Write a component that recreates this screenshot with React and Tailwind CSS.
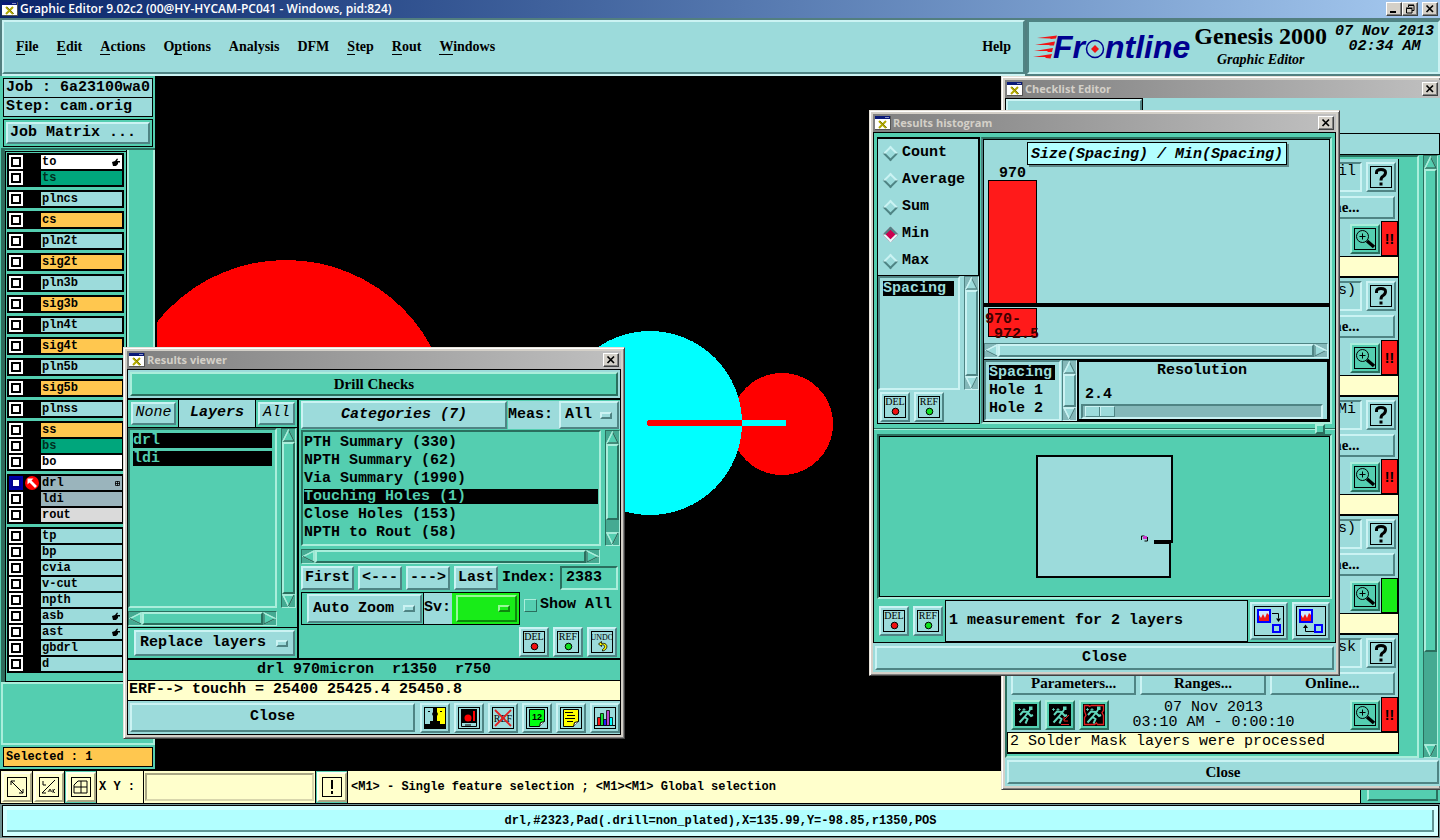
import React from "react";

const MONO = "font-['Liberation_Mono','Courier_New',monospace]";
const SERIF = "font-['Liberation_Serif','Times_New_Roman',serif]";
const UI = "font-['Open_Sans','Noto_Sans',sans-serif]";

const RAISED =
  "border-2 border-t-[#cbf3f3] border-l-[#cbf3f3] border-b-[#4f8484] border-r-[#4f8484] bg-[#9cdbdb]";
const SUNKEN =
  "border-2 border-t-[#4f8484] border-l-[#4f8484] border-b-[#cbf3f3] border-r-[#cbf3f3] bg-[#9cdbdb]";
const RAISED_TEAL =
  "border-2 border-t-[#aaeedb] border-l-[#aaeedb] border-b-[#2a6f5e] border-r-[#2a6f5e] bg-[#54ceb0]";
const SUNKEN_TEAL =
  "border-2 border-t-[#2a6f5e] border-l-[#2a6f5e] border-b-[#aaeedb] border-r-[#aaeedb] bg-[#54ceb0]";
const RAISED_CREAM =
  "border-2 border-t-[#ffffee] border-l-[#ffffee] border-b-[#a8a684] border-r-[#a8a684] bg-[#ffffcc]";

function AppGlyph() {
  return (
    <svg viewBox="0 0 16 14" className="h-[14px] w-4 shrink-0" aria-hidden="true">
      <rect width="16" height="14" fill="#555" />
      <rect x="0" y="0" width="15" height="13" fill="#fff" />
      <rect x="0" y="0" width="15" height="3" fill="#0a1a78" />
      <rect x="10" y="1" width="4" height="1" fill="#8890c0" />
      <path d="M4 5l7 7M11 5l-7 7" stroke="#b0a800" strokeWidth="2" />
      <path d="M5 5l7 7" stroke="#6b6600" strokeWidth="0.7" />
    </svg>
  );
}

function WinButton({ label, kind }) {
  return (
    <button
      aria-label={label}
      className="flex h-[14px] w-4 shrink-0 items-center justify-center border border-t-white border-l-white border-b-[#404040] border-r-[#404040] bg-[#d4d0c8] shadow-[inset_-1px_-1px_0_#808080]"
    >
      <svg viewBox="0 0 10 10" className="h-[10px] w-[10px]" fill="none" stroke="#000" aria-hidden="true">
        {kind === "close" && <path d="M1.5 1.5l6.5 6.5M8 1.5L1.5 8" strokeWidth="1.7" />}
        {kind === "min" && <path d="M1 8h6" strokeWidth="2" />}
        {kind === "restore" && (
          <path d="M3.5 3V1.5H9v5H7M3 1h6M1.5 4.5H7V9H1.5zM1 4h6.5" strokeWidth="1" />
        )}
      </svg>
    </button>
  );
}

function Window({ title, className, children }) {
  return (
    <section
      aria-label={title}
      className={
        "absolute flex flex-col border border-t-[#e6e2da] border-l-[#e6e2da] border-b-[#404040] border-r-[#404040] bg-[#d4d0c8] p-[3px] shadow-[inset_1px_1px_0_#fff,inset_-1px_-1px_0_#808080] " +
        className
      }
    >
      <header className="flex h-[18px] items-center gap-1 bg-linear-to-r from-[#808080] to-[#c0c0c0] px-[2px]">
        <AppGlyph />
        <h2 className={UI + " -ml-[2px] flex-1 text-[11px] font-bold leading-4 text-[#d4d0c8]"}>{title}</h2>
        <WinButton label={"Close " + title} kind="close" />
      </header>
      {children}
    </section>
  );
}

function Arrow({ dir, teal }) {
  const light = teal ? "#aaeedb" : "#cbf3f3";
  const dark = teal ? "#2a6f5e" : "#4f8484";
  const turn = { up: 0, right: 90, down: 180, left: 270 }[dir];
  return (
    <svg viewBox="0 0 13 13" className="h-[13px] w-[13px] shrink-0" aria-hidden="true">
      <g transform={"rotate(" + turn + " 6.5 6.5)"}>
        <path d="M6.5 1L12 12H1z" fill={teal ? "#54ceb0" : "#9cdbdb"} stroke={light} strokeWidth="1.3" />
        <path d="M6.5 1L12 12H1" fill="none" stroke={dir === "down" || dir === "left" ? light : dark} strokeWidth="1.3" />
        <path d="M6.5 1L1 12" stroke={dir === "right" || dir === "up" ? light : dark} strokeWidth="1.3" />
      </g>
    </svg>
  );
}

function ScrollBar({ horizontal, teal, className = "", rest = "hidden" }) {
  const trough = teal
    ? "border-t-[#2a6f5e] border-l-[#2a6f5e] border-b-[#aaeedb] border-r-[#aaeedb] bg-[#45aa92]"
    : "border-t-[#4f8484] border-l-[#4f8484] border-b-[#cbf3f3] border-r-[#cbf3f3] bg-[#84b8b9]";
  return (
    <div
      role="scrollbar"
      aria-orientation={horizontal ? "horizontal" : "vertical"}
      aria-valuenow={0}
      className={
        "flex shrink-0 items-stretch border " +
        trough +
        (horizontal ? " h-[15px] " : " w-[15px] flex-col ") +
        className
      }
    >
      <Arrow dir={horizontal ? "left" : "up"} teal={teal} />
      <div className={"flex-1 " + (teal ? RAISED_TEAL : RAISED)} />
      <div className={rest} />
      <Arrow dir={horizontal ? "right" : "down"} teal={teal} />
    </div>
  );
}

function OptionMenu({ label, value, className, tone = RAISED, nub = RAISED }) {
  return (
    <div className={"relative flex items-center " + tone + " " + className}>
      <select
        aria-label={label}
        className="h-full w-full appearance-none bg-transparent pl-1 text-[15px] font-bold leading-5 outline-none"
      >
        <option>{value}</option>
      </select>
      <span className={"pointer-events-none absolute right-[5px] h-[7px] w-3 " + nub} />
    </div>
  );
}

function IconButton({ label, children, className = "", tone = RAISED }) {
  return (
    <button aria-label={label} className={"flex h-[30px] w-[30px] shrink-0 items-center justify-center " + tone + " " + className}>
      <svg viewBox="0 0 22 22" className="h-[22px] w-[22px]" aria-hidden="true">
        {children}
      </svg>
    </button>
  );
}

function BoxText({ text, children, size = 11 }) {
  return (
    <>
      <rect x=".5" y=".5" width="21" height="21" fill="none" stroke="#000" />
      <text x="11" y="9" textAnchor="middle" fontFamily="Liberation Serif, serif" fontSize={size} fontWeight="normal">
        {text}
      </text>
      {children}
    </>
  );
}

function DelButton() {
  return (
    <IconButton label="Delete">
      <BoxText text="DEL" size={10}>
        <circle cx="11.5" cy="15.5" r="3.3" fill="#f01010" stroke="#000" />
      </BoxText>
    </IconButton>
  );
}

function RefButton() {
  return (
    <IconButton label="Reference">
      <BoxText text="REF" size={10}>
        <circle cx="11.5" cy="15.5" r="3.3" fill="#10e020" stroke="#000" />
      </BoxText>
    </IconButton>
  );
}

function Logo() {
  return (
    <div className="flex items-center" aria-label="Frontline">
      <svg viewBox="0 0 24 24" className="h-6 w-6" aria-hidden="true">
        <g fill="#f01414">
          <path d="M4 3L24 .5 23 3.5 18 4 17 3.6z" />
          <path d="M2 10L22 6.5 21 10.5 17 10.5 16 10z" />
          <path d="M1 16L20 13 19 17 15 17 14 16z" />
          <path d="M0 22L19 19 17.500 23.500 13 23 12 22z" />
        </g>
      </svg>
      <div className="-ml-1 flex items-center font-['Liberation_Sans',Arial,sans-serif] text-[32px] font-bold italic leading-8 text-[#000090]">
        <span>Fr</span>
        <svg viewBox="0 0 20 20" className="mt-1 h-5 w-5" aria-hidden="true">
          <circle cx="10" cy="10" r="8.500" fill="none" stroke="#000090" strokeWidth="1.5" />
          <path d="M10 6l4 4-4 4-4-4z" fill="#f01414" />
        </svg>
        <span>ntline</span>
      </div>
    </div>
  );
}

const MENUS = [
  ["", "F", "ile"],
  ["", "E", "dit"],
  ["", "A", "ctions"],
  ["O", "p", "tions"],
  ["Analysis", "", ""],
  ["DFM", "", ""],
  ["", "S", "tep"],
  ["", "R", "out"],
  ["", "W", "indows"],
];

function Header() {
  return (
    <div className="flex h-[58px] shrink-0 gap-[2px] bg-[#527f80] pl-[2px] pt-[2px]">
      <nav className={SERIF + " mb-[2px] flex flex-1 items-center border-2 border-t-[#cbf3f3] border-l-[#cbf3f3] border-b-[#4f8484] border-r-[#4f8484] bg-[#9cdbdb] px-3 text-sm font-bold shadow-[0_2px_0_#cbf3f3]"}>
        <div className="flex flex-1 gap-[18px]">
          {MENUS.map(([a, b, c]) => (
            <button key={a + b + c} className="leading-4">
              {a}
              {b && <span className="border-b border-black">{b}</span>}
              {c}
            </button>
          ))}
        </div>
        <button>Help</button>
      </nav>
      <div className="mb-[2px] flex w-[413px] items-center border-2 border-t-[#4f8484] border-l-[#4f8484] border-b-[#cbf3f3] border-r-[#cbf3f3] bg-[#9cdbdb] pl-1">
        <Logo />
        <div className={SERIF + " ml-1 flex flex-col items-center self-start font-bold"}>
          <span className="text-2xl leading-7">Genesis 2000</span>
          <span className="text-sm italic leading-5">Graphic Editor</span>
        </div>
        <div className={MONO + " ml-1 flex flex-1 flex-col items-center self-start pt-[2px] text-[15px] font-bold italic leading-[15px]"}>
          <span>07 Nov 2013</span>
          <span>02:34 AM</span>
        </div>
      </div>
    </div>
  );
}

const AQUA = "bg-[#9cdbdb]";
const ORANGE = "bg-[#ffc74f]";
const GREEN = "bg-[#00a67c] text-[#003020]";
const WHITE = "bg-white";
const SLATE = "bg-[#9ab4bc]";
const LAYERS = [
  [["to", WHITE, "hand"], ["ts", GREEN]],
  [["plncs", AQUA]],
  [["cs", ORANGE]],
  [["pln2t", AQUA]],
  [["sig2t", ORANGE]],
  [["pln3b", AQUA]],
  [["sig3b", ORANGE]],
  [["pln4t", AQUA]],
  [["sig4t", ORANGE]],
  [["pln5b", AQUA]],
  [["sig5b", ORANGE]],
  [["plnss", AQUA]],
  [["ss", ORANGE], ["bs", GREEN], ["bo", WHITE]],
  [["drl", SLATE, "grid"], ["ldi", SLATE], ["rout", "bg-[#dadada]"]],
  [
    ["tp", AQUA],
    ["bp", AQUA],
    ["cvia", AQUA],
    ["v-cut", AQUA],
    ["npth", AQUA],
    ["asb", AQUA, "hand"],
    ["ast", AQUA, "hand"],
    ["gbdrl", AQUA],
    ["d", AQUA],
  ],
];

function LayerRow({ name, tone, mark }) {
  const active = name === "drl";
  return (
    <div className="flex h-4 items-center px-[2px]">
      <input
        id={"layer-" + name}
        type="checkbox"
        className={
          active
            ? "h-[14px] w-[14px] appearance-none border-2 border-[#0000a8] bg-white shadow-[inset_0_0_0_2px_#000090]"
            : "h-[14px] w-[14px] appearance-none border-2 border-white bg-white shadow-[inset_0_0_0_2px_#000]"
        }
      />
      <span className="flex w-[18px] justify-center">
        {active && (
          <svg viewBox="0 0 14 14" className="h-[14px] w-[14px]" aria-hidden="true">
            <circle cx="7" cy="7" r="7" fill="#f00" />
            <path d="M2.500 2.500h6l-2 2 5.500 5.500-2 2-5.500-5.500-2 2z" fill="#fff" />
          </svg>
        )}
      </span>
      <label
        htmlFor={"layer-" + name}
        className={"flex h-[14px] flex-1 items-center justify-between pl-[1px] pr-[2px] text-xs font-bold leading-[14px] " + tone}
      >
        {name}
        {mark === "hand" && (
          <svg viewBox="0 0 8 8" className="h-2 w-2" aria-hidden="true">
            <path d="M0 4l3-1 2-2.500 1 .5-1 2h3v1.500H6V6L4 8H1z" />
          </svg>
        )}
        {mark === "grid" && (
          <svg viewBox="0 0 5 5" className="h-[5px] w-[5px]" aria-hidden="true">
            <path d="M.5.5h4v4h-4zM2.500 0v5M0 2.500h5" fill="none" stroke="#000" strokeWidth=".8" />
          </svg>
        )}
      </label>
    </div>
  );
}

function Sidebar() {
  return (
    <aside className={MONO + " flex w-[155px] shrink-0 flex-col bg-[#54ceb0] pl-[1px]"}>
      <div className="flex flex-col px-[2px] pt-[2px] text-[15px] font-bold">
        <div className="h-5 border border-black bg-[#9cdbdb] pl-[2px] leading-[18px]">Job : 6a23100wa0</div>
        <div className="-mt-[1px] h-5 border border-black bg-[#9cdbdb] pl-[2px] leading-[18px]">Step: cam.orig</div>
        <div className="mt-[2px] border border-black p-[2px]">
          <button className={"block h-[22px] w-full pl-[2px] text-left leading-[18px] " + RAISED}>Job Matrix ...</button>
        </div>
      </div>
      <div className="mt-[1px] flex flex-1 border-t-2 border-l-4 border-t-[#2a6f5e] border-l-[#2f6b5c]">
        <div className="flex w-[122px] flex-col border-r border-b border-black">
          <div className="mt-[1px] flex flex-1 flex-col gap-[3px] border-t border-l border-black py-[1px] pl-[1px] pr-[2px]">
            {LAYERS.map((group) => (
              <div key={group[0][0]} className="bg-black py-[1px]">
                {group.map(([name, tone, mark]) => (
                  <LayerRow key={name} name={name} tone={tone} mark={mark} />
                ))}
              </div>
            ))}
          </div>
        </div>
        <div className="flex-1 border-r-2 border-l-2 border-[#aaeedb]" />
      </div>
      <div className="h-[63px] border-2 border-[#aaeedb]" />
      <div className="px-[2px] py-[2px]">
        <div className="h-5 border border-black bg-[#ffc74f] pl-[2px] text-xs font-bold leading-[18px]">Selected : 1</div>
      </div>
    </aside>
  );
}

function Canvas() {
  return (
    <main className="flex flex-1 bg-black pl-[2px]">
      <svg className="w-full self-stretch" aria-label="Board view" shapeRendering="crispEdges">
        <circle cx="129" cy="349" r="165" fill="#f00" />
        <circle cx="625" cy="348" r="51" fill="#f00" />
        <circle cx="493" cy="347" r="92" fill="#0ff" />
        <path d="M493 347H585" stroke="#f00" strokeWidth="6" />
        <circle cx="493" cy="347" r="3" fill="#f00" />
        <path d="M585 347H629" stroke="#0ff" strokeWidth="6" />
      </svg>
    </main>
  );
}

function CreamTool({ label, children, teal }) {
  return (
    <div className={"flex w-[31px] items-center justify-center " + (teal ? "bg-[#54ceb0]" : "bg-[#ffffcc]")}>
      <IconButton label={label} tone={RAISED_CREAM} className={teal ? "w-[28px]" : ""}>
        <rect x="1.500" y="1.500" width="19" height="19" fill="none" stroke="#000" />
        {children}
      </IconButton>
    </div>
  );
}

function CommandBar() {
  return (
    <div className={MONO + " flex h-[35px] shrink-0 gap-[1px] border-t-2 border-b border-black bg-black pl-[1px] text-xs font-bold"}>
      <CreamTool label="Zoom area">
        <path d="M5 5l12 12M5 9V5h4M17 13v4h-4" fill="none" stroke="#000" />
      </CreamTool>
      <CreamTool label="Snap angle">
        <path d="M4 17L17 4M5 5v4h3M4 17h4" fill="none" stroke="#000" />
        <path d="M10 16l2-3 2 3m-3-1h2M15 13v4m2-4l-2 2 2 2" fill="none" stroke="#000" strokeWidth=".8" />
      </CreamTool>
      <CreamTool label="Grid" teal>
        <path d="M4 17V9l4-4h9v12zM11 5v12M4 11h13" fill="none" stroke="#000" />
      </CreamTool>
      <label htmlFor="xy" className="flex w-[46px] items-center whitespace-nowrap bg-[#ffffcc] pl-[2px]">
        X Y :
      </label>
      <div className="flex bg-[#ffffcc] px-[1px] py-[2px]">
        <input
          id="xy"
          className="w-[169px] border-2 border-t-[#a8a684] border-l-[#a8a684] border-b-[#d8d6ac] border-r-[#d8d6ac] bg-[#ffffcc] px-1 outline-none"
        />
      </div>
      <CreamTool label="Alert" teal>
        <path d="M11 4v9M11 15v3" stroke="#000" strokeWidth="2" />
      </CreamTool>
      <p className="flex flex-1 items-center bg-[#ffffcc] pl-[3px]">&lt;M1&gt; - Single feature selection ; &lt;M1&gt;&lt;M1&gt; Global selection</p>
      <div className="flex w-[79px] bg-[#54ceb0] p-[2px] pl-[6px]">
        <button aria-label="Units" className={"flex-1 " + RAISED_TEAL} />
      </div>
    </div>
  );
}

function ListRow({ children, selected, on }) {
  return (
    <li>
      <button className={"flex h-[15px] w-full items-center text-left leading-[17px] " + (selected ? "bg-black " + on : "")}>{children}</button>
    </li>
  );
}

function PushButton({ children, className }) {
  return <button className={"flex items-center justify-center whitespace-nowrap " + RAISED + " " + className}>{children}</button>;
}

const CATEGORIES = [
  "PTH Summary (330)",
  "NPTH Summary (62)",
  "Via Summary (1990)",
  "Touching Holes (1)",
  "Close Holes (153)",
  "NPTH to Rout (58)",
];

function ResultsViewer() {
  return (
    <Window title="Results viewer" className="left-[123px] top-[347px] w-[502px]">
      <div className={MONO + " border border-black bg-[#54ceb0] text-[15px] font-bold"}>
        <div className="border-2 border-[#9cdbdb] bg-[#9cdbdb]">
          <h3 className={SERIF + " flex h-6 items-center justify-center text-[15px] " + RAISED_TEAL}>Drill Checks</h3>
        </div>
        <div className="flex border-t-2 border-b-2 border-black">
          <div className="flex w-[171px] shrink-0 flex-col border-r-2 border-black">
            <div className="flex h-[28px] border-b border-black">
              <div className="flex w-[50px] p-[2px] pl-[3px]">
                <PushButton className="flex-1 font-normal italic">None</PushButton>
              </div>
              <div className="flex flex-1 items-center justify-center border-x border-black bg-[#9cdbdb] italic">Layers</div>
              <div className="flex w-[41px] p-[2px]">
                <PushButton className="flex-1 font-normal italic">All</PushButton>
              </div>
            </div>
            <div className="flex gap-1 pr-[1px]">
              <ul className={"flex h-[180px] flex-1 flex-col gap-[3px] px-[3px] py-[3px] " + SUNKEN_TEAL}>
                <ListRow selected on="text-[#54ceb0]">drl</ListRow>
                <ListRow selected on="text-[#54ceb0]">ldi</ListRow>
              </ul>
              <ScrollBar teal />
            </div>
            <ScrollBar teal horizontal className="mr-5 mt-[3px]" />
            <div className="mt-[1px] flex h-[31px] border-t border-black p-[2px] pl-[6px]">
              <OptionMenu label="Layer display mode" value="Replace layers" className="flex-1" />
            </div>
          </div>
          <div className="flex min-w-0 flex-1 flex-col pl-[2px]">
            <div className="flex h-[30px] py-[1px]">
              <PushButton className="w-[206px] italic">Categories (7)</PushButton>
              <div className="ml-[1px] flex flex-1 items-center justify-between bg-[#9cdbdb] pr-[1px]">
                Meas:
                <OptionMenu label="Measurements" value="All" className="h-full w-[60px]" />
              </div>
            </div>
            <div className="flex gap-1">
              <ul className={"flex h-[116px] flex-1 flex-col gap-[3px] px-[1px] py-[3px] " + SUNKEN_TEAL}>
                {CATEGORIES.map((c) => (
                  <ListRow key={c} on="text-[#54ceb0]" selected={c.startsWith("Touching")}>
                    {c}
                  </ListRow>
                ))}
              </ul>
              <ScrollBar teal rest="h-3" />
            </div>
            <ScrollBar teal horizontal className="mr-5 mt-[3px]" />
            <div className="mt-[2px] flex h-6 gap-1 pr-[2px]">
              <PushButton className="w-[53px]">First</PushButton>
              <PushButton className="w-11">&lt;---</PushButton>
              <PushButton className="w-11">---&gt;</PushButton>
              <PushButton className="w-11">Last</PushButton>
              <label htmlFor="index" className="leading-6">
                Index:
              </label>
              <input id="index" defaultValue="2383" className={"min-w-0 flex-1 pl-1 outline-none " + SUNKEN_TEAL} />
            </div>
            <div className="mt-[2px] flex h-[33px] items-stretch">
              <div className="flex w-[123px] border border-black p-[1px] pl-[5px]">
                <OptionMenu label="Zoom mode" value="Auto Zoom" className="flex-1" />
              </div>
              <div className="-ml-[1px] flex w-[97px] items-stretch border border-black bg-[#9cdbdb]">
                <span className="flex w-7 items-center">Sv:</span>
                <div className="flex flex-1 bg-[#18ec18] p-[2px] pl-1">
                  <OptionMenu
                    label="Severity"
                    value=""
                    className="flex-1"
                    tone="border-2 border-t-[#98f898] border-l-[#98f898] border-b-[#0d880d] border-r-[#0d880d] bg-[#18ec18]"
                    nub="border-2 border-t-[#98f898] border-l-[#98f898] border-b-[#0d880d] border-r-[#0d880d] bg-[#18ec18]"
                  />
                </div>
              </div>
              <label className="ml-1 flex h-[26px] items-center gap-[3px] whitespace-nowrap">
                <input
                  type="checkbox"
                  className="h-[13px] w-[13px] appearance-none border border-t-[#aaeedb] border-l-[#aaeedb] border-b-[#2a6f5e] border-r-[#2a6f5e]"
                />
                Show All
              </label>
            </div>
            <div className="mt-[1px] flex flex-1 items-center justify-end gap-1 pr-[3px]">
              <DelButton />
              <RefButton />
              <IconButton label="Undo">
                <BoxText text="UNDO" size={8}>
                  <path d="M10.500 10.500l-3 2.500 3 2.500v-1.500c4-1 4 3 1 4.500v1.500c6-1 6-9-1-7.500z" fill="#ff0" stroke="#000" strokeWidth=".8" />
                </BoxText>
              </IconButton>
            </div>
          </div>
        </div>
        <p className="h-[21px] whitespace-pre border-b border-black text-center leading-5">{"drl 970micron  r1350  r750"}</p>
        <p className="h-5 border-b border-black bg-[#ffffcc] pl-[1px] leading-[18px]">ERF--&gt; touchh = 25400 25425.4 25450.8</p>
        <div className="flex h-[33px] items-center gap-1 bg-[#9cdbdb] pl-[2px]">
          <PushButton className="mr-[1px] h-[29px] flex-1">Close</PushButton>
          <IconButton label="Contrast">
            <rect width="11" height="22" fill="#9cdbdb" />
            <rect x="11" width="11" height="22" fill="#ff0" />
            <path d="M9 0h4v5l1 2-1 2v5h3v3h5v5H1v-5h5v-3h3V9L8 7l1-2z" fill="#000" />
            <path d="M4 4.500h2M16 4.500h2" stroke="#000" />
            <rect x=".5" y=".5" width="21" height="21" fill="none" stroke="#000" />
          </IconButton>
          <IconButton label="Board picture">
            <rect x=".5" y=".5" width="21" height="21" fill="none" stroke="#000" />
            <path d="M3 2h16v14H3z" fill="#000" />
            <circle cx="10" cy="11" r="3.500" fill="#f00" />
            <path d="M16 4v10M8 13h5" stroke="#f00" strokeWidth="2" />
            <path d="M3.500 15.500v4h15v-4M7 18h6" fill="none" stroke="#000" />
          </IconButton>
          <IconButton label="Clear reference">
            <rect x=".5" y=".5" width="21" height="21" fill="none" stroke="#000" />
            <text x="11" y="15" textAnchor="middle" fontFamily="Liberation Serif, serif" fontSize="10" fontWeight="normal">REF</text>
            <path d="M3 3l16 16M19 3L3 19" stroke="#e02020" strokeWidth="1.800" />
          </IconButton>
          <IconButton label="Numbers">
            <rect x=".5" y=".5" width="21" height="21" fill="none" stroke="#000" />
            <path d="M3.500 2.500h15v12l-5 5h-10z" fill="#0f1" stroke="#000" />
            <path d="M18.500 14.500l-4 1-1 4" fill="#fff" stroke="#000" />
            <text x="11" y="13" textAnchor="middle" fontFamily="Liberation Sans, sans-serif" fontSize="9" fontWeight="bold">12</text>
          </IconButton>
          <IconButton label="Report">
            <rect x=".5" y=".5" width="21" height="21" fill="none" stroke="#000" />
            <path d="M3.500 2.500h15v12l-5 5h-10z" fill="#ff0" stroke="#000" />
            <path d="M5 5.500h8M7 8.500h8M5 11.500h10M7 14.500h6" stroke="#000" />
            <path d="M18.500 14.500l-4 1-1 4" fill="#fff" stroke="#000" />
          </IconButton>
          <IconButton label="Histogram">
            <rect x=".5" y=".5" width="21" height="21" fill="none" stroke="#000" />
            <path d="M1 18.500h20" stroke="#000" />
            <g stroke="#000" strokeWidth=".8">
              <path d="M3.500 10.500h3v8h-3z" fill="#f11" />
              <path d="M6.500 6.500h3v12h-3z" fill="#1d3" />
              <path d="M9.500 12.500h3v6h-3z" fill="#22f" />
              <path d="M12.500 3.500h3v15h-3z" fill="#b4c" />
              <path d="M15.500 10.500h3v8h-3z" fill="#0ff" />
            </g>
          </IconButton>
        </div>
      </div>
    </Window>
  );
}

function HistogramList({ children, className }) {
  return <ul className={"flex flex-col gap-[3px] py-[3px] pl-[3px] pr-1 " + SUNKEN + " " + className}>{children}</ul>;
}

function TransferIcon({ up }) {
  return (
    <svg viewBox="0 0 30 30" className="h-[30px] w-[30px]" aria-hidden="true">
      <rect x=".5" y=".5" width="29" height="29" fill="none" stroke="#000" />
      <rect x="4" y="4" width="12" height="12" fill="#f01818" stroke="#00f" strokeWidth="2" />
      <path d="M5 5h10v4l-2-2-2 5-2-4-2 4-2-3z" fill="#cfe8ff" />
      {up ? (
        <>
          <rect x="23" y="19" width="0" height="0" />
          <rect x="19" y="19" width="7" height="7" fill="#9cdbdb" stroke="#00f" strokeWidth="2" />
          <path d="M18 25.500H9.500V21" stroke="#000" fill="none" />
          <path d="M7 22l2.500-3.500L12 22z" />
        </>
      ) : (
        <>
          <rect x="19" y="19" width="7" height="7" fill="#9cdbdb" stroke="#00f" strokeWidth="2" />
          <path d="M18 7.500h6.500v5" stroke="#000" fill="none" />
          <path d="M22 12.500l2.500 3.500 2.500-3.500z" />
        </>
      )}
    </svg>
  );
}

function ResultsHistogram() {
  return (
    <Window title="Results histogram" className="right-[100px] top-[110px] w-[471px]">
      <div className={MONO + " text-[15px] font-bold"}>
        <div className="flex flex-col border border-black bg-[#54ceb0] px-[3px] pt-1">
          <div className="flex h-[287px] gap-[1px]">
            <div className="flex w-[103px] shrink-0 flex-col border border-black bg-[#9cdbdb]">
              <div role="radiogroup" aria-label="Statistic" className="flex flex-col border-r border-b border-t border-black pl-[7px] pt-[1px]">
                {["Count", "Average", "Sum", "Min", "Max"].map((s) => (
                  <label key={s} className="flex h-[27px] items-center gap-[6px]">
                    <input
                      type="radio"
                      name="stat"
                      defaultChecked={s === "Min"}
                      className="h-[11px] w-[11px] rotate-45 appearance-none border-2 border-t-[#cbf3f3] border-l-[#cbf3f3] border-b-[#4f8484] border-r-[#4f8484] checked:border-t-[#4f8484] checked:border-l-[#4f8484] checked:border-b-[#e8fafa] checked:border-r-[#e8fafa] checked:bg-[#cc0050]"
                    />
                    {s}
                  </label>
                ))}
              </div>
              <div className="flex gap-1">
                <HistogramList className="h-[114px] flex-1">
                  <ListRow selected on="text-[#9cdbdb]">Spacing</ListRow>
                </HistogramList>
                <ScrollBar />
              </div>
              <div className="flex flex-1 items-center gap-1 pl-[2px]">
                <DelButton />
                <RefButton />
              </div>
            </div>
            <div className="flex min-w-0 flex-1 flex-col border-2 border-t-[#2a6f5e] border-l-[#4f8484] border-b-[#aaeedb] border-r-[#aaeedb]">
              <div className="flex flex-1 flex-col border border-black bg-[#9cdbdb]">
                <div className="relative h-[203px]">
                  <svg className="block h-full w-full" aria-label="Spacing histogram" shapeRendering="crispEdges">
                    <rect x="4.500" y="40.500" width="48" height="124" fill="#ff1a1a" stroke="#000" />
                    <rect x="4.500" y="168.500" width="48" height="28" fill="#ff1a1a" stroke="#000" />
                    <path d="M0 165h600" stroke="#000" strokeWidth="4" />
                    <text x="15" y="37">970</text>
                    <text x="1" y="183" fill="#3c0000">970-</text>
                    <text x="10" y="198" fill="#3c0000">972.5</text>
                  </svg>
                  <div className="absolute left-[43px] top-[2px] h-[23px] whitespace-nowrap border border-black bg-[#b2ffff] px-[3px] italic leading-6 shadow-[2px_2px_0_#5f8888]">
                    Size(Spacing) / Min(Spacing)
                  </div>
                </div>
                <ScrollBar horizontal className="mr-[1px]" />
                <div className="mt-[1px] flex flex-1 border-t border-black">
                  <HistogramList className="w-[77px] shrink-0">
                    <ListRow selected on="text-[#9cdbdb]">Spacing</ListRow>
                    <ListRow>Hole 1</ListRow>
                    <ListRow>Hole 2</ListRow>
                  </HistogramList>
                  <ScrollBar className="ml-[1px]" />
                  <div className="flex flex-1 flex-col border-2 border-black pl-[2px] pr-1">
                    <label htmlFor="resolution" className="text-center leading-[18px]">
                      Resolution
                    </label>
                    <output htmlFor="resolution" className="mt-[6px] pl-1 leading-[18px]">
                      2.4
                    </output>
                    <input
                      id="resolution"
                      type="range"
                      defaultValue={1}
                      className="h-[15px] w-full appearance-none border-2 border-t-[#4f8484] border-l-[#4f8484] border-b-[#cbf3f3] border-r-[#cbf3f3] bg-[#84b8b9] [&::-webkit-slider-thumb]:h-[11px] [&::-webkit-slider-thumb]:w-[30px] [&::-webkit-slider-thumb]:appearance-none [&::-webkit-slider-thumb]:border [&::-webkit-slider-thumb]:border-t-[#cbf3f3] [&::-webkit-slider-thumb]:border-l-[#cbf3f3] [&::-webkit-slider-thumb]:border-b-[#4f8484] [&::-webkit-slider-thumb]:border-r-[#4f8484] [&::-webkit-slider-thumb]:bg-[linear-gradient(90deg,#9cdbdb_13px,#4f8484_13px,#4f8484_14px,#cbf3f3_14px,#cbf3f3_15px,#9cdbdb_15px)]"
                    />
                  </div>
                </div>
              </div>
            </div>
          </div>
          <div className="-mx-[3px] flex h-[10px] items-center">
            <div className="h-[2px] flex-1 border-t border-t-[#2a6f5e] bg-[#aaeedb]" />
            <div className={"h-[10px] w-[10px] " + RAISED_TEAL} />
            <div className="h-[2px] w-[10px] border-t border-t-[#2a6f5e] bg-[#aaeedb]" />
          </div>
          <div className={"flex h-[165px] " + SUNKEN_TEAL}>
            <svg className="w-full self-stretch border border-black" aria-label="Board overview">
              <path d="M157 19H292V105H290V140H157z" fill="#9cdbdb" stroke="#000" strokeWidth="2" />
              <path d="M274 105h17" stroke="#000" strokeWidth="4" />
              <path d="M261.500 103v-4h3M267.500 100v4h-3" fill="none" stroke="#000" />
              <rect x="263" y="99" width="4" height="3" fill="#c3c" />
            </svg>
          </div>
          <div className="flex h-[43px] items-center gap-1 px-[2px]">
            <DelButton />
            <RefButton />
            <p className="-mx-[2px] h-[42px] flex-1 border border-black bg-[#9cdbdb] pl-[3px] leading-10">1 measurement for 2 layers</p>
            <button aria-label="Send to next" className={"flex h-[38px] w-[38px] items-center justify-center " + RAISED}>
              <TransferIcon />
            </button>
            <button aria-label="Fetch previous" className={"flex h-[38px] w-[38px] items-center justify-center " + RAISED}>
              <TransferIcon up />
            </button>
          </div>
        </div>
        <div className="flex bg-[#9cdbdb] px-[2px] pb-[2px] pt-[3px]">
          <PushButton className="h-6 flex-1">Close</PushButton>
        </div>
      </div>
    </Window>
  );
}

function Runner({ extra }) {
  return (
    <>
      <rect width="22" height="22" fill="#000" />
      {extra === "frame" && <path d="M1.500 1.500h4l1 1 2-1h12v5l-1.500 2 1.500 3v9h-6l-1-1.500-2 1.500h-10v-7l1.500-2-1.500-4z" fill="none" stroke="#e02020" strokeWidth="1.300" />}
      <g stroke="#62d8bc" fill="none" strokeWidth="2">
        <path d="M15 6L9.500 13M9.500 13l3 2-2 4.500M9.500 13L4.500 18.500M5 11l3-3.500 5 .5M13 9l3 3 2-1" />
      </g>
      <rect x="14" y="2.500" width="3.500" height="3.500" fill="#62d8bc" />
      <path d="M3 5.500h3M4.500 4v3M7.500 5.500h3M9 4v3" stroke="#62d8bc" strokeWidth=".8" />
      {extra === "line" && <path d="M20 11l-5 5M15 13v4h4M12 20.500h8" fill="none" stroke="#e02020" />}
    </>
  );
}

const CHECKS = [
  { tail: "il", flag: "!!" },
  { tail: "s)", flag: "!!" },
  { tail: "Mi", flag: "!!" },
  { tail: "s)", flag: "" },
  { tail: "sk", flag: "!!", date: "07 Nov 2013", time: "03:10 AM - 0:00:10", message: "2 Solder Mask layers were processed" },
];

function CheckItem({ tail, flag, date, time, message }) {
  return (
    <article className="flex flex-col border-r border-black bg-[#9cdbdb] pt-[3px]">
      <div className="flex gap-1 pl-1 pr-[2px]">
        <div className={MONO + " h-[30px] flex-1 pr-1 text-right text-[15px] leading-4 " + SUNKEN}>{tail}</div>
        <IconButton label="Help on check">
          <rect x=".5" y=".5" width="21" height="21" fill="none" stroke="#000" />
          <path d="M6.500 8V6.500Q6.500 3.500 11 3.500t4.500 3Q15.500 9 13 10.500 11 11.500 11 14.500M11 16.500v3" fill="none" stroke="#000" strokeWidth="3" />
        </IconButton>
      </div>
      <div className={SERIF + " mt-1 grid grid-cols-3 gap-1 pl-1 pr-[3px] text-[15px] font-bold"}>
        <PushButton className="h-[23px]">Parameters...</PushButton>
        <PushButton className="h-[23px]">Ranges...</PushButton>
        <PushButton className="h-[23px]">Online...</PushButton>
      </div>
      <div className="mt-[2px] flex h-[35px] items-center gap-1 pl-1">
        <IconButton label="Run globally" tone={RAISED_TEAL}>
          <Runner />
        </IconButton>
        <IconButton label="Run on feature" tone={RAISED_TEAL}>
          <Runner extra="line" />
        </IconButton>
        <IconButton label="Run in profile" tone={RAISED_TEAL}>
          <Runner extra="frame" />
        </IconButton>
        <div className={MONO + " flex-1 pr-8 text-center text-[15px] leading-[15px]"}>
          <div>{date}</div>
          <div>{time}</div>
        </div>
        <IconButton label="View results" tone={RAISED_TEAL} className="-mr-[3px]">
          <rect x=".5" y=".5" width="21" height="21" fill="none" stroke="#000" />
          <circle cx="8.500" cy="8.500" r="6" fill="none" stroke="#000" />
          <path d="M5.500 8.500h6M8.500 5.500v6" stroke="#000" />
          <path d="M13 13l7 6" stroke="#000" strokeWidth="3.500" />
        </IconButton>
        <div
          className={
            "flex w-[17px] items-center justify-center self-stretch border border-black font-['Liberation_Sans',sans-serif] text-sm font-bold " +
            (flag ? "bg-[#ff1a1a]" : "bg-[#18ec18]")
          }
        >
          {flag}
        </div>
      </div>
      <p className={MONO + " h-[22px] border-t border-b-2 border-l border-black bg-[#ffffcc] pl-[2px] text-[15px] leading-[18px]"}>{message}</p>
    </article>
  );
}

function ChecklistEditor() {
  return (
    <Window title="Checklist Editor" className="right-0 top-[76px] w-[439px] border-r-0 pr-0">
      <div className="flex flex-col bg-[#9cdbdb]">
        <div className="flex h-[35px] items-stretch">
          <div className="flex w-[138px] border border-b-0 border-black">
            <div className={"flex-1 " + RAISED} />
          </div>
        </div>
        <div className="h-[22px] border border-black" />
        <div className="flex bg-[#54ceb0] pr-[2px]">
          <div className={"mr-1 min-w-0 flex-1 pr-[18px] pt-[2px] pb-[2px] " + SUNKEN_TEAL}>
            {CHECKS.map((c, i) => (
              <CheckItem key={i} {...c} />
            ))}
          </div>
          <ScrollBar teal rest="h-[92px]" />
        </div>
        <div className="flex p-[2px] pr-[1px]">
          <button className={SERIF + " flex h-6 flex-1 items-center justify-center text-[15px] font-bold " + RAISED}>Close</button>
        </div>
      </div>
    </Window>
  );
}

export default function App() {
  return (
    <div className="relative flex min-h-screen w-full flex-col overflow-hidden bg-black text-black">
      <header className="flex h-[18px] shrink-0 items-center gap-1 bg-linear-to-r from-[#0a246a] to-[#a6caf0] px-[2px]">
        <AppGlyph />
        <h1 className={UI + " -ml-[2px] flex-1 text-xs font-semibold leading-4 text-white"}>
          Graphic Editor 9.02c2 (00@HY-HYCAM-PC041 - Windows, pid:824)
        </h1>
        <div className="flex">
          <WinButton label="Minimize" kind="min" />
          <WinButton label="Restore" kind="restore" />
        </div>
        <WinButton label="Close" kind="close" />
      </header>
      <Header />
      <div className="flex flex-1 items-stretch">
        <Sidebar />
        <Canvas />
      </div>
      <CommandBar />
      <footer className="shrink-0 border-b-2 border-[#c8c6c0] bg-[#6f9090] p-[1px] pl-[2px]">
        <div className="border border-black">
          <p className={MONO + " h-[30px] border-4 border-[#d2ffff] bg-[#b2ffff] text-center text-xs font-bold leading-[22px] shadow-[inset_-2px_-2px_0_#5f9494]"}>
            drl,#2323,Pad(.drill=non_plated),X=135.99,Y=-98.85,r1350,POS
          </p>
        </div>
      </footer>
      <ChecklistEditor />
      <ResultsHistogram />
      <ResultsViewer />
    </div>
  );
}
